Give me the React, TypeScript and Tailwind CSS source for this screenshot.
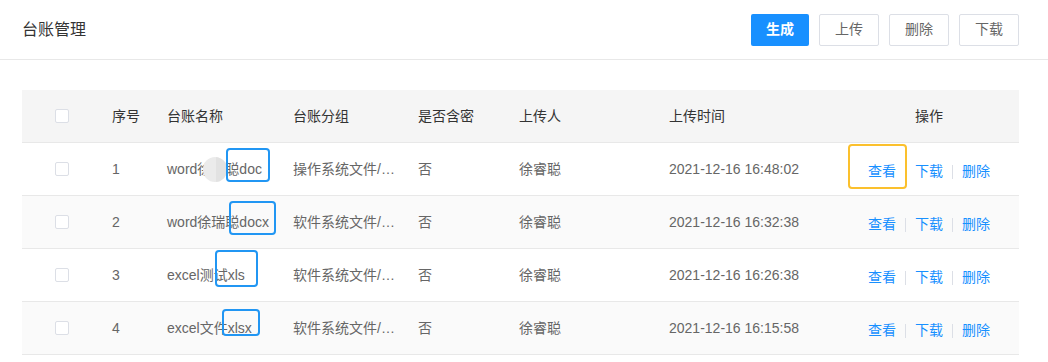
import React from 'react'

interface LedgerRow {
  id: number
  name: string
  group: string
  secret: string
  uploader: string
  time: string
}

const rows: LedgerRow[] = [
  { id: 1, name: 'word徐瑞聪doc', group: '操作系统文件/测试', secret: '否', uploader: '徐睿聪', time: '2021-12-16 16:48:02' },
  { id: 2, name: 'word徐瑞聪docx', group: '软件系统文件/测试', secret: '否', uploader: '徐睿聪', time: '2021-12-16 16:32:38' },
  { id: 3, name: 'excel测试xls', group: '软件系统文件/测试', secret: '否', uploader: '徐睿聪', time: '2021-12-16 16:26:38' },
  { id: 4, name: 'excel文件xlsx', group: '软件系统文件/测试', secret: '否', uploader: '徐睿聪', time: '2021-12-16 16:15:58' },
]

const gridCols = 'grid grid-cols-[57px_55px_126px_125px_101px_150px_170px_180px] pl-[33px] items-center'

function Checkbox() {
  return <span className="block h-[14px] w-[14px] rounded-[2px] border border-[#dcdfe6] bg-white" />
}

function Separator() {
  return <span className="mx-[9px] h-[14px] w-px bg-[#dcdfe6]" />
}

export default function App() {
  return (
    <div
      className="relative h-[362px] w-full overflow-hidden bg-white"
      style={{ fontFamily: '"Liberation Sans", Arial, "Noto Sans CJK SC", sans-serif' }}
    >
      <div className="flex h-[60px] items-center justify-between border-b border-[#e8e8e8] pl-[22px] pr-[29px]">
        <h1 className="text-[16px] text-[#333]">台账管理</h1>
        <div className="flex gap-[10px]">
          <button className="h-[32px] w-[58px] rounded-[2px] bg-[#1890ff] text-[14px] font-bold text-white">生成</button>
          <button className="h-[32px] w-[60px] rounded-[2px] border border-[#dcdfe6] text-[14px] text-[#666]">上传</button>
          <button className="h-[32px] w-[60px] rounded-[2px] border border-[#dcdfe6] text-[14px] text-[#666]">删除</button>
          <button className="h-[32px] w-[60px] rounded-[2px] border border-[#dcdfe6] text-[14px] text-[#666]">下载</button>
        </div>
      </div>

      <div className="ml-[22px] mr-[29px] mt-[30px] text-[14px]">
        <div className={`${gridCols} h-[53px] border-b border-[#e8e8e8] bg-[#f5f5f5] text-[#333]`}>
          <Checkbox />
          <span>序号</span>
          <span>台账名称</span>
          <span>台账分组</span>
          <span>是否含密</span>
          <span>上传人</span>
          <span>上传时间</span>
          <span className="text-center">操作</span>
        </div>
        {rows.map((row, index) => (
          <div
            key={row.id}
            className={`${gridCols} h-[53px] border-b border-[#e8e8e8] text-[#666] ${index % 2 === 1 ? 'bg-[#fafafa]' : 'bg-white'}`}
          >
            <Checkbox />
            <span>{row.id}</span>
            <span className="whitespace-nowrap">{row.name}</span>
            <span className="max-w-[102px] truncate">{row.group}</span>
            <span>{row.secret}</span>
            <span>{row.uploader}</span>
            <span>{row.time}</span>
            <div className="flex items-center justify-center pt-[5px] text-[#1890ff]">
              <span>查看</span>
              <Separator />
              <span>下载</span>
              <Separator />
              <span>删除</span>
            </div>
          </div>
        ))}
      </div>

      {/* annotation marks over the screenshot */}
      <span className="absolute left-[203px] top-[157px] h-[25px] w-[24px] overflow-hidden rounded-full bg-[#ebebeb]">
        <span className="absolute right-0 top-0 h-full w-[11px] bg-[#e2e2e2]" />
      </span>
      <span className="absolute left-[226px] top-[148px] h-[34px] w-[44px] rounded-[4px] border-2 border-[#2196f3]" />
      <span className="absolute left-[229px] top-[201px] h-[34px] w-[47px] rounded-[4px] border-2 border-[#2196f3]" />
      <span className="absolute left-[215px] top-[250px] h-[37px] w-[43px] rounded-[4px] border-2 border-[#2196f3]" />
      <span className="absolute left-[222px] top-[309px] h-[27px] w-[38px] rounded-[4px] border-2 border-[#2196f3]" />
      <span className="absolute left-[848px] top-[144px] h-[45px] w-[59px] rounded-[4px] border-2 border-[#fbc02d]" />
    </div>
  )
}
